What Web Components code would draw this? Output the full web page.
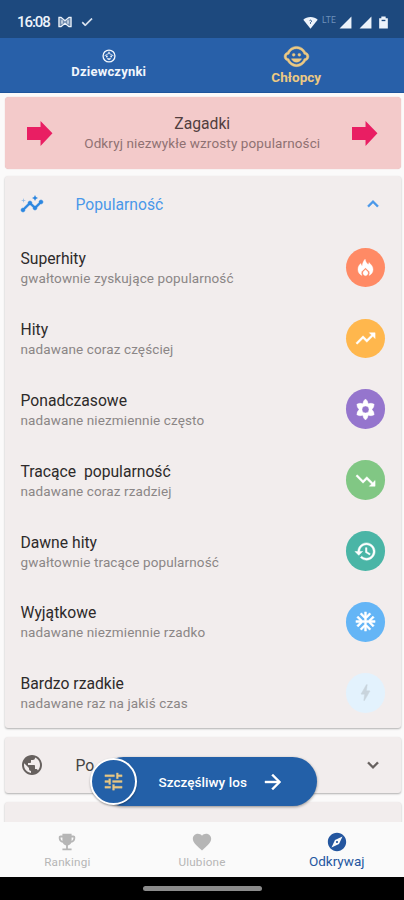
<!DOCTYPE html>
<html lang="pl">
<head>
<meta charset="utf-8">
<title>Odkrywaj</title>
<style>
html,body{margin:0;height:100%;background:#fbfafa}
body{font-family:Roboto,"Liberation Sans",sans-serif;overflow:hidden}
</style>
</head>
<body>
<names-app></names-app>
<script>
const ICONS = {
  child: '<g stroke="currentColor" stroke-width=".4"><circle cx="14.5" cy="10.5" r="1.25"/><circle cx="9.5" cy="10.5" r="1.25"/><path d="M22.94 12.66c.04-.21.06-.43.06-.66s-.02-.45-.06-.66c-.25-1.51-1.36-2.74-2.81-3.17-.53-1.12-1.28-2.1-2.19-2.91C16.36 3.85 14.28 3 12 3s-4.36.85-5.94 2.26c-.92.81-1.67 1.8-2.19 2.91-1.45.43-2.56 1.65-2.81 3.17-.04.21-.06.43-.06.66s.02.45.06.66c.25 1.51 1.36 2.74 2.81 3.17.52 1.11 1.27 2.09 2.17 2.89C7.62 20.14 9.71 21 12 21s4.38-.86 5.97-2.28c.9-.8 1.65-1.79 2.17-2.89 1.44-.43 2.55-1.65 2.8-3.17zM19 14c-.1 0-.19-.02-.29-.03-.2.67-.49 1.29-.86 1.86C16.6 17.74 14.45 19 12 19s-4.6-1.26-5.85-3.17c-.37-.57-.66-1.19-.86-1.86-.1.01-.19.03-.29.03-1.1 0-2-.9-2-2s.9-2 2-2c.1 0 .19.02.29.03.2-.67.49-1.29.86-1.86C7.4 6.26 9.55 5 12 5s4.6 1.26 5.85 3.17c.37.57.66 1.19.86 1.86.1-.01.19-.03.29-.03 1.1 0 2 .9 2 2s-.9 2-2 2zM7.5 14c.76 1.77 2.49 3 4.5 3s3.74-1.23 4.5-3h-9z"/></g>',
  girl: '<circle cx="12" cy="12" r="10.2" fill="none" stroke="currentColor" stroke-width="2.3"/><path d="M12 4.500v4.500M4.500 11.500Q10 10 12 6Q14 10 19.500 11.500" fill="none" stroke="currentColor" stroke-width="1.500"/><circle cx="8.300" cy="12.800" r="1.600"/><circle cx="15.700" cy="12.800" r="1.600"/><path d="M8 16h8q-1.500 3-4 3t-4-3z"/>',
  insights: '<path stroke="currentColor" stroke-width=".5" d="M21 8c-1.450 0-2.260 1.440-1.930 2.510l-3.550 3.560c-.3-.09-.74-.09-1.040 0l-2.550-2.550C12.270 10.450 11.460 9 10 9c-1.450 0-2.270 1.440-1.930 2.520l-4.560 4.550C2.440 15.740 1 16.550 1 18c0 1.100.9 2 2 2 1.450 0 2.260-1.440 1.930-2.510l4.550-4.560c.3.090.74.090 1.040 0l2.550 2.550C12.730 16.550 13.540 18 15 18c1.450 0 2.270-1.440 1.930-2.520l3.560-3.550C21.560 12.260 23 11.450 23 10c0-1.100-.9-2-2-2z"/><path d="M15 9l.94-2.070L18 6l-2.060-.93L15 3l-.92 2.070L12 6l2.080.93z"/><path opacity=".5" d="M3.500 11L4 9l2-.5L4 8l-.5-2L3 8l-2 .5L3 9z"/>',
  up: '<path d="M12 8l-6 6 1.410 1.410L12 10.830l4.590 4.580L18 14z"/>',
  down: '<path d="M16.590 8.590L12 13.170 7.410 8.590 6 10l6 6 6-6z"/>',
  fire: '<path fill-rule="evenodd" d="M11.500 1.500C12 5 13.800 6.500 15.300 8.200Q16.500 7.500 16.300 5.700C19.500 8.500 21.500 11.300 21.500 14.500C21.500 18 19.500 20.800 16.500 22Q18 19.500 17 17.200L14.800 15.200L12 12.200L9.200 15.200L7 17.200Q6 19.500 7.500 22C4.500 20.800 2.500 18 2.500 14.500C2.500 11 4 8.500 6.200 7Q6.200 9.500 7.800 10.200C8.200 6.500 9.500 3.500 11.500 1.500Z"/><path d="M12 14.800Q15.800 17.300 15 20Q14.200 22.300 12 22.300T9 20Q8.200 17.300 12 14.800Z"/>',
  trendUp: '<path d="M16 6l2.290 2.290-4.880 4.880-4-4L2 16.590 3.410 18l6-6 4 4 6.300-6.290L22 12V6z"/>',
  trendDown: '<path d="M16 18l2.290-2.290-4.880-4.880-4 4L2 7.410 3.410 6l6 6 4-4 6.300 6.290L22 12v6z"/>',
  flower: '<path fill-rule="evenodd" d="M12 1 Q14.400 2.700 14.800 6 Q17.900 4.800 21 6.500 Q21 9.900 18.700 12 Q21 14.100 21 17.500 Q17.900 19.200 14.800 18 Q14.400 21.300 12 23 Q9.600 21.300 9.200 18 Q6.100 19.200 3 17.500 Q3 14.100 5.300 12 Q3 9.900 3 6.500 Q6.100 4.800 9.200 6 Q9.600 2.700 12 1ZM12 8.300a3.700 3.700 0 1 0 0 7.400a3.700 3.700 0 1 0 0-7.400Z"/>',
  history: '<path d="M13 3c-4.970 0-9 4.030-9 9H1l3.890 3.890.07.14L9 12H6c0-3.870 3.130-7 7-7s7 3.130 7 7-3.130 7-7 7c-1.930 0-3.680-.79-4.940-2.060l-1.420 1.420C8.270 19.990 10.510 21 13 21c4.970 0 9-4.030 9-9s-4.030-9-9-9zm-1 5v5l4.280 2.540.72-1.210-3.500-2.080V8H12z"/>',
  snow: '<path d="M22 11h-4.170l3.240-3.240-1.410-1.420L15 11h-2V9l4.660-4.660-1.420-1.410L13 6.170V2h-2v4.170L7.760 2.930 6.340 4.340 11 9v2H9L4.340 6.340 2.930 7.760 6.170 11H2v2h4.170l-3.240 3.240 1.410 1.420L9 13h2v2l-4.660 4.660 1.420 1.410L11 17.830V22h2v-4.170l3.240 3.240 1.420-1.410L13 15v-2h2l4.660 4.660 1.410-1.420L17.830 13H22z"/>',
  bolt: '<path d="M11 21h-1l1-7H7.500c-.58 0-.57-.32-.38-.66.190-.34.050-.08.070-.12C8.480 10.940 10.420 7.540 13 3h1l-1 7h3.500c.49 0 .56.330.47.510l-.07.150C12.960 17.550 11 21 11 21z"/>',
  globe: '<path d="M12 2C6.480 2 2 6.480 2 12s4.480 10 10 10 10-4.480 10-10S17.520 2 12 2zm-1 17.930c-3.950-.49-7-3.850-7-7.930 0-.62.080-1.210.210-1.790L9 15v1c0 1.100.9 2 2 2v1.930zm6.900-2.540c-.26-.81-1-1.390-1.900-1.390h-1v-3c0-.55-.45-1-1-1H8v-2h2c.55 0 1-.45 1-1V7h2c1.100 0 2-.9 2-2v-.41c2.930 1.190 5 4.060 5 7.410 0 2.080-.8 3.970-2.100 5.390z"/>',
  tune: '<path stroke="currentColor" stroke-width=".3" d="M3 17v2h6v-2H3zM3 5v2h10V5H3zm10 16v-2h8v-2h-8v-2h-2v6h2zM7 9v2H3v2h4v2h2V9H7zm14 4v-2H11v2h10zm-6-4h2V7h4V5h-4V3h-2v6z"/>',
  arrow: '<path stroke="currentColor" stroke-width=".4" d="M12 4l-1.410 1.410L16.170 11H4v2h12.170l-5.580 5.590L12 20l8-8z"/>',
  trophy: '<path d="M19 5h-2V3H7v2H5c-1.100 0-2 .9-2 2v1c0 2.550 1.920 4.630 4.390 4.940.63 1.500 1.980 2.630 3.610 2.960V19H7v2h10v-2h-4v-3.100c1.630-.33 2.980-1.460 3.610-2.960C19.080 12.630 21 10.550 21 8V7c0-1.100-.9-2-2-2zM5 8V7h2v3.820C5.840 10.400 5 9.300 5 8zm14 0c0 1.300-.84 2.400-2 2.820V7h2v1z"/>',
  heart: '<path d="M12 21.350l-1.450-1.320C5.400 15.360 2 12.280 2 8.500 2 5.420 4.420 3 7.500 3c1.740 0 3.410.81 4.500 2.090C13.090 3.810 14.760 3 16.500 3 19.580 3 22 5.420 22 8.500c0 3.780-3.400 6.860-8.550 11.540L12 21.350z"/>',
  compass: '<path d="M12 10.900c-.61 0-1.100.49-1.100 1.100s.49 1.100 1.100 1.100c.61 0 1.100-.49 1.100-1.100s-.49-1.100-1.100-1.100zM12 2C6.480 2 2 6.480 2 12s4.480 10 10 10 10-4.480 10-10S17.520 2 12 2zm2.190 12.190L6 18l3.810-8.190L18 6l-3.810 8.190z"/>',
  check: '<path stroke="currentColor" d="M9 16.170L4.830 12l-1.420 1.410L9 19 21 7l-1.410-1.410z"/>',
  mail: '<path d="M3 4.500h3.500L12 9.500l5.500-5H21a1 1 0 0 1 1 1v13a1 1 0 0 1-1 1h-3.500L12 15l-5.500 4.500H3a1 1 0 0 1-1-1v-13a1 1 0 0 1 1-1z" opacity=".4"/><path d="M3 5h3l6 5 6-5h3v14h-3l-6-5-6 5H3zM7.500 9.500v5M16.500 9.500v5" fill="none" stroke="currentColor" stroke-width="1.800"/>',
  block: '<path d="M0 6.500h12.500V1L23.500 12.300 12.500 24v-5.500H0z"/>',
  wifi: '<path d="M12 22L.5 7.500C3.500 4.500 7.500 3 12 3s8.500 1.500 11.500 4.500z"/><path d="M10.500 9q1.500-1.500 2.800 0t-1.300 3v2" fill="none" stroke="#1d497e" stroke-width="1.500"/>',
  signal: '<path d="M1 23L23 1v22z"/>',
  battery: '<path d="M8 1h8v3h4v19H4V4h4z"/><path d="M8.500 7h7v2.500h-7z" fill="#1d497e"/>'
};

const define = (name, render) => customElements.define(name, class extends HTMLElement {
  connectedCallback() {
    if (this.shadowRoot) return;
    const t = document.createElement('template');
    t.innerHTML = render(k => this.getAttribute(k) || '');
    this.attachShadow({mode: 'open'}).append(t.content.cloneNode(true));
  }
});

define('ui-icon', a => `<style>:host{display:block;flex:none;width:${a('size') || 24}px;height:${a('size') || 24}px}svg{display:block;width:100%;height:100%;fill:currentColor}</style>
  <svg viewBox="0 0 24 24">${ICONS[a('name')] || ''}</svg>`);

define('status-bar', () => `<style>
  :host{display:flex;align-items:center;height:38px;flex:none;box-sizing:border-box;padding:6px 14px 0 17px;background:#1d497e;color:#edf3fb;font-size:15px}
  .time{width:33px;letter-spacing:-1.050px;margin-right:7px;font-weight:500}.check{margin-left:7px}.grow{flex:1}
  .lte{font-size:8.500px;letter-spacing:.2px;color:#6f91bb;margin:-5px 2px 0 4px;width:15px}
  .s2{margin:0 5px 0 7px}
  </style><span class="time">16:08</span><ui-icon name="mail" size="16"></ui-icon><ui-icon class="check" name="check" size="14"></ui-icon><span class="grow"></span>
  <ui-icon name="wifi" size="15"></ui-icon><span class="lte">LTE</span><ui-icon name="signal" size="13"></ui-icon><ui-icon class="s2" name="signal" size="13"></ui-icon><ui-icon name="battery" size="13"></ui-icon>`);

define('gender-tab', a => `<style>
  :host{flex:1;display:flex;flex-direction:column;align-items:center;color:#f2f6fc;font-weight:700;font-size:13px;line-height:16px;padding-top:11px;box-sizing:border-box}
  :host([active]){color:#ecc983;padding-top:5px;font-size:13.500px}
  span{letter-spacing:.2px;margin-top:1px}:host([active]) span{margin-top:-1px;letter-spacing:.05px}
  </style><ui-icon name="${a('icon')}" size="${a('size')}"></ui-icon><span><slot></slot></span>`);

define('promo-banner', a => `<style>
  :host{display:flex;align-items:center;justify-content:space-between;height:72px;box-sizing:border-box;padding:0 22.500px 0 22px;background:#f3caca;border-radius:4px;box-shadow:0 0 1px #d9a9a9;color:#e91e63}
  div{text-align:center}.t{font-size:15.700px;line-height:20px;color:#513e3f;padding-top:1px}.s{font-size:13.500px;line-height:19px;letter-spacing:.12px;color:#8f7172}
  </style><ui-icon name="block" size="26"></ui-icon><div><div class="t">${a('heading')}</div><div class="s"><slot></slot></div></div><ui-icon name="block" size="26"></ui-icon>`);

define('expansion-card', a => `<style>
  :host{display:block;background:#f2eded;border-radius:3px;box-shadow:0 1px 2px rgba(0,0,0,.3);color:#67615f}
  header{display:flex;align-items:center;height:56px;padding:0 16.500px 0 15px}
  h2{margin:0 0 0 32px;flex:1;font-size:15.700px;font-weight:400;letter-spacing:0;color:#444}
  .chev{stroke:currentColor;stroke-width:.5px}
  :host([open]) header,:host([open]) h2{color:#4a98e9}
  :host([open]) .lead{color:#2b86e0}
  </style><header><ui-icon class="lead" name="${a('icon')}" size="24"></ui-icon><h2>${a('heading')}</h2><ui-icon class="chev" name="${a('chevron')}" size="22"></ui-icon></header><slot></slot>`);

define('trend-row', a => `<style>
  :host{display:flex;align-items:center;justify-content:space-between;height:70.900px;padding:0 15.500px 0 16px}
  .t{font-size:15.700px;line-height:20px;color:#2d2a2a;white-space:pre;padding-top:2px}
  .s{font-size:13.500px;line-height:19px;letter-spacing:.12px;color:#8b8686}
  i{display:grid;place-items:center;width:39.500px;height:39.500px;border-radius:50%;background:${a('tint')};color:${a('ink') || '#fff'}}
  ui-icon{stroke:currentColor;stroke-width:.5px}
  </style><div><div class="t">${a('heading')}</div><div class="s"><slot></slot></div></div><i><ui-icon name="${a('icon')}" size="${a('size') || 23}"></ui-icon></i>`);

define('lucky-button', () => `<style>
  :host{position:absolute;left:89.500px;top:757px;width:227.500px;height:49px;display:flex;align-items:center;color:#fff}
  .pill{position:absolute;inset:0 0 0 9px;border-radius:25px;background:#2360a8;box-shadow:0 1px 3px rgba(0,0,0,.4)}
  .knob{position:relative;flex:none;display:grid;place-items:center;width:43.500px;height:43.500px;border:2px solid #fff;border-radius:50%;background:#2360a8;color:#e9c783;box-shadow:0 1px 2px rgba(0,0,0,.35)}
  b{position:relative;font-weight:500;font-size:13.500px;letter-spacing:.05px;margin-left:21.500px;flex:1}
  .go{position:relative;margin-right:32.500px}
  </style><div class="pill"></div><div class="knob"><ui-icon name="tune" size="23"></ui-icon></div><b><slot></slot></b><ui-icon class="go" name="arrow" size="24"></ui-icon>`);

define('nav-item', a => `<style>
  :host{flex:1;display:flex;flex-direction:column;align-items:center;padding-top:9px;color:#b6b6b6;font-size:11.700px;line-height:18px;letter-spacing:.2px}
  :host([active]){color:#24569f;font-size:13.500px;line-height:17px;letter-spacing:0}
  </style><ui-icon name="${a('icon')}" size="22"></ui-icon><span><slot></slot></span>`);

define('names-app', () => `<style>
  :host{display:flex;flex-direction:column;position:relative;width:404px;height:900px;overflow:hidden;background:#fbfafa}
  .tabs{display:flex;height:55px;flex:none;background:#2860a9;box-sizing:border-box;padding:0 0 0 15px;border-bottom:1px solid #1e559c}
  .tabs gender-tab{flex:none;width:187.500px}
  main{flex:1;min-height:0;overflow:hidden;padding:4px 3.500px 0 4.500px;display:flex;flex-direction:column;gap:9px}
  main>*{flex:none}promo-banner{margin-bottom:-2px}
  nav{display:flex;flex:none;height:55px;background:#fafafa;position:relative}
  footer{flex:none;height:23px;background:#000;display:grid;place-items:center}
  footer div{width:119px;height:5px;border-radius:3px;background:#8b8b8b}
  </style>
  <status-bar></status-bar>
  <div class="tabs"><gender-tab icon="girl" size="14">Dziewczynki</gender-tab><gender-tab active icon="child" size="27">Chłopcy</gender-tab></div>
  <main>
    <promo-banner heading="Zagadki">Odkryj niezwykłe wzrosty popularności</promo-banner>
    <expansion-card open icon="insights" heading="Popularność" chevron="up">
      <trend-row heading="Superhity" icon="fire" tint="#ff8a65" size="19">gwałtownie zyskujące popularność</trend-row>
      <trend-row heading="Hity" icon="trendUp" tint="#ffb74d">nadawane coraz częściej</trend-row>
      <trend-row heading="Ponadczasowe" icon="flower" tint="#9575cd">nadawane niezmiennie często</trend-row>
      <trend-row heading="Tracące  popularność" icon="trendDown" tint="#81c784">nadawane coraz rzadziej</trend-row>
      <trend-row heading="Dawne hity" icon="history" tint="#4ab5a6">gwałtownie tracące popularność</trend-row>
      <trend-row heading="Wyjątkowe" icon="snow" tint="#64b5f6">nadawane niezmiennie rzadko</trend-row>
      <trend-row heading="Bardzo rzadkie" icon="bolt" tint="#e3f2fd" ink="#c9d4dc" size="21">nadawane raz na jakiś czas</trend-row>
    </expansion-card>
    <expansion-card icon="globe" heading="Po" chevron="down"></expansion-card>
    <expansion-card icon="" heading="" chevron=""></expansion-card>
  </main>
  <lucky-button>Szczęśliwy los</lucky-button>
  <nav><nav-item icon="trophy">Rankingi</nav-item><nav-item icon="heart">Ulubione</nav-item><nav-item active icon="compass">Odkrywaj</nav-item></nav>
  <footer><div></div></footer>`);
</script>
</body>
</html>
